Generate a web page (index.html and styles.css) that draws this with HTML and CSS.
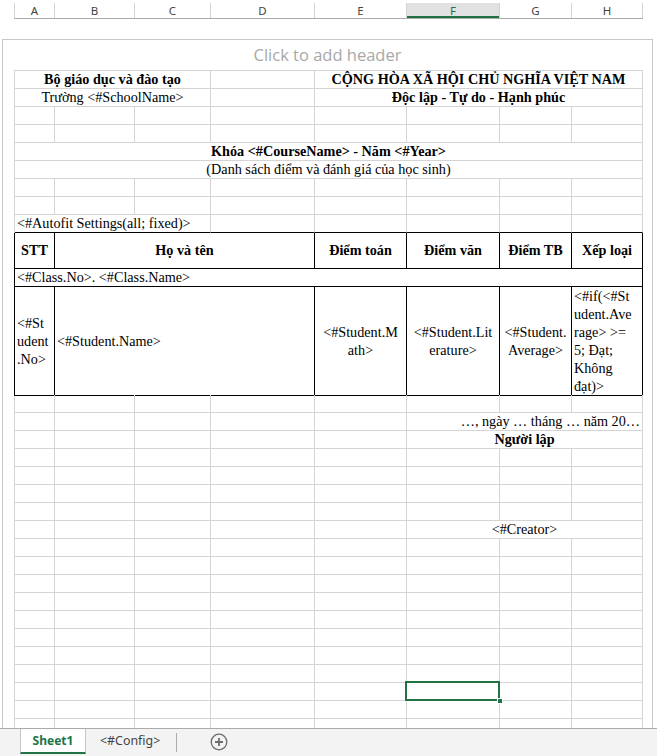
FILE: index.html
```html
<!DOCTYPE html>
<html lang="vi">
<head>
<meta charset="utf-8">
<title>Sheet1</title>
<link rel="stylesheet" href="styles.css">
</head>
<body>
<div class="app">
  <div class="colheads">
    <div class="ch">A</div><div class="ch">B</div><div class="ch">C</div><div class="ch">D</div>
    <div class="ch">E</div><div class="ch ch-sel">F</div><div class="ch">G</div><div class="ch">H</div>
  </div>

  <div class="page">
    <div class="hdr">Click to add header</div>
    <div class="sheet">
      <div class="row"><div class="cell s3 b ctr">Bộ giáo dục và đào tạo</div><div class="cell"></div><div class="cell s4 b ctr">CỘNG HÒA XÃ HỘI CHỦ NGHĨA VIỆT NAM</div></div>
      <div class="row"><div class="cell s3 ctr">Trường &lt;#SchoolName&gt;</div><div class="cell"></div><div class="cell s4 b ctr">Độc lập - Tự do - Hạnh phúc</div></div>
      <div class="row"><div class="cell"></div><div class="cell"></div><div class="cell"></div><div class="cell"></div><div class="cell"></div><div class="cell"></div><div class="cell"></div><div class="cell"></div></div>
      <div class="row"><div class="cell"></div><div class="cell"></div><div class="cell"></div><div class="cell"></div><div class="cell"></div><div class="cell"></div><div class="cell"></div><div class="cell"></div></div>
      <div class="row"><div class="cell s8 b ctr">Khóa &lt;#CourseName&gt; - Năm &lt;#Year&gt;</div></div>
      <div class="row"><div class="cell s8 ctr">(Danh sách điểm và đánh giá của học sinh)</div></div>
      <div class="row"><div class="cell"></div><div class="cell"></div><div class="cell"></div><div class="cell"></div><div class="cell"></div><div class="cell"></div><div class="cell"></div><div class="cell"></div></div>
      <div class="row"><div class="cell"></div><div class="cell"></div><div class="cell"></div><div class="cell"></div><div class="cell"></div><div class="cell"></div><div class="cell"></div><div class="cell"></div></div>
      <div class="row above"><div class="cell s3">&lt;#Autofit Settings(all; fixed)&gt;</div><div class="cell"></div><div class="cell"></div><div class="cell"></div><div class="cell"></div><div class="cell"></div></div>

      <div class="row thead blk"><div class="cell b ctr">STT</div><div class="cell s3 b ctr">Họ và tên</div><div class="cell b ctr">Điểm toán</div><div class="cell b ctr">Điểm văn</div><div class="cell b ctr">Điểm TB</div><div class="cell b ctr">Xếp loại</div></div>
      <div class="row blk"><div class="cell s8">&lt;#Class.No&gt;. &lt;#Class.Name&gt;</div></div>
      <div class="row tdata blk">
        <div class="cell ml">&lt;#St<br>udent<br>.No&gt;</div>
        <div class="cell s3 ml">&lt;#Student.Name&gt;</div>
        <div class="cell ml ctr">&lt;#Student.M<br>ath&gt;</div>
        <div class="cell ml ctr">&lt;#Student.Lit<br>erature&gt;</div>
        <div class="cell ml ctr">&lt;#Student.<br>Average&gt;</div>
        <div class="cell ml">&lt;#if(&lt;#St<br>udent.Ave<br>rage&gt; &gt;=<br>5; Đạt;<br>Không<br>đạt)&gt;</div>
      </div>

      <div class="row"><div class="cell"></div><div class="cell"></div><div class="cell"></div><div class="cell"></div><div class="cell"></div><div class="cell"></div><div class="cell"></div><div class="cell"></div></div>
      <div class="row"><div class="cell"></div><div class="cell"></div><div class="cell"></div><div class="cell"></div><div class="cell"></div><div class="cell s3 rgt">…, ngày … tháng … năm 20…</div></div>
      <div class="row"><div class="cell"></div><div class="cell"></div><div class="cell"></div><div class="cell"></div><div class="cell"></div><div class="cell s3 b ctr">Người lập</div></div>
      <div class="row"><div class="cell"></div><div class="cell"></div><div class="cell"></div><div class="cell"></div><div class="cell"></div><div class="cell"></div><div class="cell"></div><div class="cell"></div></div>
      <div class="row"><div class="cell"></div><div class="cell"></div><div class="cell"></div><div class="cell"></div><div class="cell"></div><div class="cell"></div><div class="cell"></div><div class="cell"></div></div>
      <div class="row"><div class="cell"></div><div class="cell"></div><div class="cell"></div><div class="cell"></div><div class="cell"></div><div class="cell"></div><div class="cell"></div><div class="cell"></div></div>
      <div class="row"><div class="cell"></div><div class="cell"></div><div class="cell"></div><div class="cell"></div><div class="cell"></div><div class="cell"></div><div class="cell"></div><div class="cell"></div></div>
      <div class="row"><div class="cell"></div><div class="cell"></div><div class="cell"></div><div class="cell"></div><div class="cell"></div><div class="cell s3 ctr">&lt;#Creator&gt;</div></div>
      <div class="row"><div class="cell"></div><div class="cell"></div><div class="cell"></div><div class="cell"></div><div class="cell"></div><div class="cell"></div><div class="cell"></div><div class="cell"></div></div>
      <div class="row"><div class="cell"></div><div class="cell"></div><div class="cell"></div><div class="cell"></div><div class="cell"></div><div class="cell"></div><div class="cell"></div><div class="cell"></div></div>
      <div class="row"><div class="cell"></div><div class="cell"></div><div class="cell"></div><div class="cell"></div><div class="cell"></div><div class="cell"></div><div class="cell"></div><div class="cell"></div></div>
      <div class="row"><div class="cell"></div><div class="cell"></div><div class="cell"></div><div class="cell"></div><div class="cell"></div><div class="cell"></div><div class="cell"></div><div class="cell"></div></div>
      <div class="row"><div class="cell"></div><div class="cell"></div><div class="cell"></div><div class="cell"></div><div class="cell"></div><div class="cell"></div><div class="cell"></div><div class="cell"></div></div>
      <div class="row"><div class="cell"></div><div class="cell"></div><div class="cell"></div><div class="cell"></div><div class="cell"></div><div class="cell"></div><div class="cell"></div><div class="cell"></div></div>
      <div class="row"><div class="cell"></div><div class="cell"></div><div class="cell"></div><div class="cell"></div><div class="cell"></div><div class="cell"></div><div class="cell"></div><div class="cell"></div></div>
      <div class="row"><div class="cell"></div><div class="cell"></div><div class="cell"></div><div class="cell"></div><div class="cell"></div><div class="cell"></div><div class="cell"></div><div class="cell"></div></div>
      <div class="row"><div class="cell"></div><div class="cell"></div><div class="cell"></div><div class="cell"></div><div class="cell"></div><div class="cell selected"><span class="handle"></span></div><div class="cell"></div><div class="cell"></div></div>
      <div class="row"><div class="cell"></div><div class="cell"></div><div class="cell"></div><div class="cell"></div><div class="cell"></div><div class="cell"></div><div class="cell"></div><div class="cell"></div></div>
      <div class="row"><div class="cell"></div><div class="cell"></div><div class="cell"></div><div class="cell"></div><div class="cell"></div><div class="cell"></div><div class="cell"></div><div class="cell"></div></div>
    </div>
  </div>

  <div class="tabs">
    <div class="tab active">Sheet1</div>
    <div class="tab config">&lt;#Config&gt;</div>
    <div class="tab-sep"></div>
    <div class="add">
      <svg width="18" height="18" viewBox="0 0 18 18"><circle cx="9" cy="9" r="7.8" fill="none" stroke="#6d6d6d" stroke-width="1.3"/><path d="M9 5v8M5 9h8" stroke="#6d6d6d" stroke-width="1.8"/></svg>
    </div>
  </div>
</div>
</body>
</html>
```

FILE: styles.css
```css
* { box-sizing: border-box; }
html, body { margin: 0; padding: 0; background: #fff; }
.app {
  width: 657px;
  height: 756px;
  overflow: hidden;
  display: flex;
  flex-direction: column;
}
.colheads {
  display: grid;
  grid-template-columns: 40px 80px 76px 104px 92px 93px 72px 71px;
  width: 629px;
  margin-left: 14px;
  margin-top: 3px;
  border-left: 1px solid #d4d4d4;
  border-bottom: 1px solid #ababab;
  height: 16px;
  flex: none;
}
.ch {
  height: 15px;
  border-right: 1px solid #d4d4d4;
  font-family: "Noto Sans", "Open Sans", sans-serif;
  font-size: 11.5px;
  line-height: 15px;
  color: #444;
  text-align: center;
}
.ch-sel {
  background: #e1e1e1;
  color: #217346;
  box-shadow: inset 0 -2px 0 #217346;
}
.page {
  flex: none;
  margin-top: 20px;
  margin-left: 2px;
  width: 651px;
  height: 689px;
  border: 1px solid #c6c6c6;
  border-bottom: none;
  overflow: hidden;
}
.hdr {
  height: 30px;
  text-align: center;
  font-family: "Open Sans", "Noto Sans", sans-serif;
  font-size: 16.5px;
  line-height: 30px;
  color: #a8a8a8;
}
.sheet {
  margin-left: 11px;
  width: 629px;
  border-left: 1px solid #d4d4d4;
  border-top: 1px solid #d4d4d4;
  font-family: "Liberation Serif", "Times New Roman", serif;
  font-size: 14.2px;
  color: #000;
}
.row {
  display: grid;
  grid-template-columns: 40px 80px 76px 104px 92px 93px 72px 71px;
  height: 18px;
}
.cell {
  border-right: 1px solid #d4d4d4;
  border-bottom: 1px solid #d4d4d4;
  line-height: 17px;
  padding: 0 2px;
  white-space: nowrap;
  overflow: visible;
}
.s3 { grid-column: span 3; }
.s4 { grid-column: span 4; }
.s8 { grid-column: span 8; }
.b { font-weight: bold; }
.ctr { text-align: center; }
.rgt { text-align: right; }

.above .cell { border-bottom-color: #000; }
.blk .cell { border-right-color: #000; border-bottom-color: #000; }
.blk .cell:first-child { box-shadow: -1px 0 0 #000; }
.thead { height: 36px; }
.thead .cell { display: flex; align-items: center; justify-content: center; }
.tdata { height: 108px; }
.tdata .cell.ml {
  display: flex;
  flex-direction: column;
  justify-content: center;
  line-height: 18px;
}
.tdata .cell.ctr { align-items: center; }

.selected {
  position: relative;
}
.selected::after {
  content: "";
  position: absolute;
  left: -2px;
  top: -2px;
  right: -1px;
  bottom: -1px;
  border: 2px solid #217346;
}
.handle {
  position: absolute;
  right: -4px;
  bottom: -4px;
  width: 6px;
  height: 6px;
  background: #217346;
  border: 1px solid #fff;
  z-index: 1;
}

.tabs {
  flex: none;
  height: 28px;
  background: #f3f3f3;
  border-top: 1px solid #ababab;
  display: flex;
  align-items: flex-start;
  padding-left: 20px;
  font-family: "Noto Sans", "Open Sans", sans-serif;
  font-size: 12px;
  color: #444;
}
.tab {
  height: 25px;
  line-height: 24px;
}
.tab.config {
  padding: 0 15px 0 14px;
  font-size: 12.4px;
}
.tab.active {
  width: 66px;
  text-align: center;
  background: #fff;
  border-left: 1px solid #c6c6c6;
  border-right: 1px solid #c6c6c6;
  border-bottom: 2px solid #217346;
  color: #217346;
  font-weight: bold;
}
.tab-sep {
  width: 1px;
  height: 19px;
  margin-top: 4px;
  margin-left: 1px;
  background: #ababab;
}
.add {
  margin-left: 33px;
  margin-top: 4px;
  height: 18px;
}
.add svg { display: block; }
```
